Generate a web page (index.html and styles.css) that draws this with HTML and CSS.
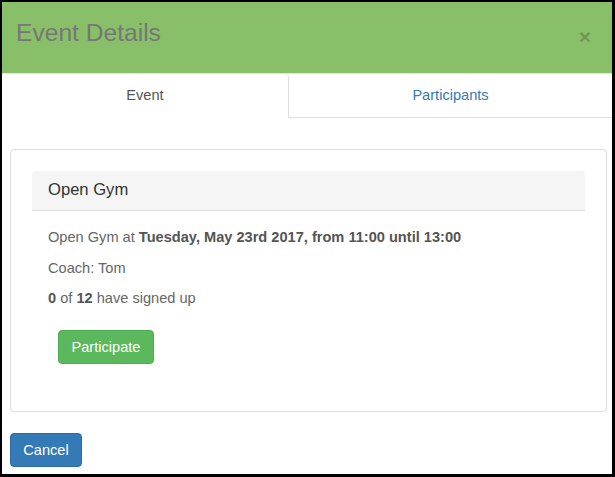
FILE: index.html
```html
<!DOCTYPE html>
<html>
<head>
<meta charset="utf-8">
<link rel="stylesheet" href="styles.css">
</head>
<body>
<div class="frame">
  <div class="modal-header">
    <h4 class="modal-title">Event Details</h4>
    <span class="close">&times;</span>
  </div>
  <div class="tabs">
    <div class="tab active">Event</div>
    <div class="tab">Participants</div>
  </div>
  <div class="modal-body">
    <div class="card">
      <div class="panel">
        <div class="panel-heading">Open Gym</div>
        <div class="panel-body">
          <p>Open Gym at <b>Tuesday, May 23rd 2017, from 11:00 until 13:00</b></p>
          <p>Coach: Tom</p>
          <p><b>0</b> of <b>12</b> have signed up</p>
          <div class="actions"><button class="btn btn-success">Participate</button></div>
        </div>
      </div>
    </div>
  </div>
  <div class="modal-footer">
    <button class="btn btn-primary">Cancel</button>
  </div>
</div>
</body>
</html>
```

FILE: styles.css
```css
* { box-sizing: border-box; }
html, body { margin: 0; padding: 0; background: #000; }
body {
  font-family: "Liberation Sans", Arial, sans-serif;
  font-size: 14.6px;
  line-height: 20px;
  color: #666;
}
.frame {
  width: 615px;
  height: 477px;
  border-style: solid;
  border-color: #000;
  border-width: 2px 3px 3px 2px;
  background: #fff;
  display: flex;
  flex-direction: column;
}
.modal-header {
  height: 72px;
  background: #88bf68;
  border-bottom: 1px solid #e5e5e5;
  display: flex;
  align-items: center;
  justify-content: space-between;
  padding: 0 21px 0 14px;
  flex-shrink: 0;
}
.modal-title {
  margin: 0 0 10px 0;
  font-size: 24.6px;
  font-weight: normal;
  color: #777;
  line-height: 30px;
}
.close {
  font-size: 21px;
  font-weight: bold;
  color: #000;
  opacity: 0.2;
  line-height: 1;
  margin-bottom: 2px;
}
.tabs {
  display: flex;
  height: 44px;
  flex-shrink: 0;
}
.tab {
  flex: 1;
  text-align: center;
  line-height: 42px;
  color: #337ab7;
  border-bottom: 1px solid #ddd;
}
.tab.active {
  flex: 0 0 287px;
  color: #555;
  border-bottom-color: transparent;
  border-right: 1px solid #ddd;
  border-top-right-radius: 4px;
}
.modal-body {
  padding: 31px 5px 0 8px;
}
.card {
  border: 1px solid #ddd;
  border-radius: 4px;
  padding: 21px 21px 11px 21px;
}
.panel-heading {
  background: #f5f5f5;
  border-bottom: 1px solid #ddd;
  border-radius: 3px 3px 0 0;
  height: 40px;
  padding: 9px 16px;
  font-size: 16.6px;
  line-height: 20px;
  color: #333;
}
.panel-body {
  padding: 16px 15px 36px 16px;
}
.panel-body p {
  margin: 0 0 10.5px 0;
}
.panel-body b { color: #555; }
.actions {
  padding: 11px 0 0 10px;
}
.btn {
  font-family: "Liberation Sans", Arial, sans-serif;
  font-size: 14.6px;
  line-height: 20px;
  padding: 6px 0;
  border: 1px solid transparent;
  border-radius: 4px;
  color: #fff;
  height: 34px;
  text-align: center;
}
.btn-success {
  background: #5cb85c;
  border-color: #4cae4c;
  width: 96px;
}
.btn-primary {
  background: #337ab7;
  border-color: #2e6da4;
  width: 72px;
}
.modal-footer {
  padding: 21px 0 0 8px;
}
```
